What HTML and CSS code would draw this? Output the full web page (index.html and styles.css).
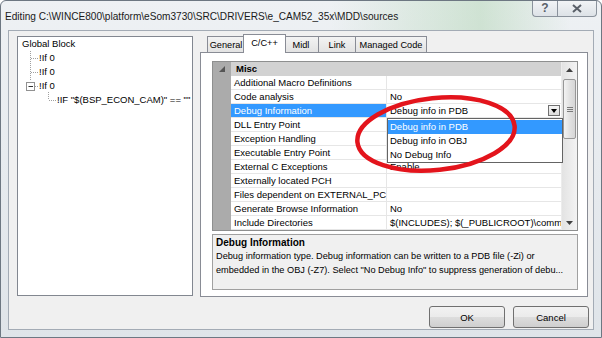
FILE: index.html
```html
<!DOCTYPE html>
<html lang="en">
<head>
    <meta charset="UTF-8">
    <meta name="viewport" content="width=device-width, initial-scale=1.0">
    <title>Editing sources</title>
    <link rel="stylesheet" href="styles.css">
</head>
<body>

<div class="window">
    <div class="titlebar">
        <span class="title">Editing C:\WINCE800\platform\eSom3730\SRC\DRIVERS\e_CAM52_35x\MDD\sources</span>
        <div class="caption">
            <span class="cap-btn help">?</span>
            <span class="cap-btn close">
                <svg width="10" height="9" viewBox="0 0 10 9"><path d="M1 1 L9 8 M9 1 L1 8" stroke="#5a6069" stroke-width="2" fill="none"/></svg>
            </span>
        </div>
    </div>

    <div class="client">
        <div class="main">
            <!-- 左のツリー -->
            <div class="tree">
                <svg class="tree-lines" width="60" height="80">
                    <g stroke="#a0a0a0" stroke-dasharray="1,1" fill="none">
                        <path d="M12.5 14 V44"/>
                        <path d="M13 21.5 H20"/>
                        <path d="M13 35.5 H20"/>
                        <path d="M17 49.5 H20"/>
                        <path d="M30.5 55 V63"/>
                        <path d="M31 63.5 H38"/>
                    </g>
                    <rect x="8.5" y="45.5" width="8" height="8" fill="#fff" stroke="#919191"/>
                    <path d="M10.5 49.5 H15" stroke="#333"/>
                </svg>
                <div class="node">Global Block</div>
                <div class="node lvl1">!If 0</div>
                <div class="node lvl1">!If 0</div>
                <div class="node lvl1">!If 0</div>
                <div class="node lvl2">!IF "$(BSP_ECON_CAM)" == ""</div>
            </div>

            <div class="tabarea">
                <div class="tabs">
                    <span class="tab">General</span>
                    <span class="tab active">C/C++</span>
                    <span class="tab">Midl</span>
                    <span class="tab">Link</span>
                    <span class="tab">Managed Code</span>
                </div>
                <div class="panel">
                    <div class="grid">
                        <div class="rows">
                            <div class="cat">
                                <span class="margin">
                                    <svg width="6" height="6" viewBox="0 0 6 6"><path d="M6 0 V6 H0 Z" fill="#555"/></svg>
                                </span>
                                <span class="cat-name">Misc</span>
                            </div>
                            <div class="row"><span class="margin"></span><span class="name">Additional Macro Definitions</span><span class="value"></span></div>
                            <div class="row"><span class="margin"></span><span class="name">Code analysis</span><span class="value">No</span></div>
                            <div class="row selected"><span class="margin"></span><span class="name">Debug Information</span>
                                <span class="value editor">Debug info in PDB
                                    <span class="drop-btn"><svg width="6" height="4" viewBox="0 0 6 4"><path d="M0 0 H6 L3 4 Z" fill="#000"/></svg></span>
                                </span>
                            </div>
                            <div class="row"><span class="margin"></span><span class="name">DLL Entry Point</span><span class="value"></span></div>
                            <div class="row"><span class="margin"></span><span class="name">Exception Handling</span><span class="value"></span></div>
                            <div class="row"><span class="margin"></span><span class="name">Executable Entry Point</span><span class="value"></span></div>
                            <div class="row"><span class="margin"></span><span class="name">External C Exceptions</span><span class="value">Enable</span></div>
                            <div class="row"><span class="margin"></span><span class="name">Externally located PCH</span><span class="value"></span></div>
                            <div class="row"><span class="margin"></span><span class="name">Files dependent on EXTERNAL_PCH</span><span class="value"></span></div>
                            <div class="row"><span class="margin"></span><span class="name">Generate Browse Information</span><span class="value">No</span></div>
                            <div class="row"><span class="margin"></span><span class="name">Include Directories</span><span class="value">$(INCLUDES); $(_PUBLICROOT)\common\oak\inc</span></div>
                        </div>
                        <div class="scrollbar">
                            <span class="sb-arrow"><svg width="7" height="4" viewBox="0 0 7 4"><path d="M0 4 H7 L3.5 0 Z" fill="#404040"/></svg></span>
                            <div class="sb-track">
                                <span class="sb-thumb"><span class="grip"></span></span>
                            </div>
                            <span class="sb-arrow"><svg width="7" height="4" viewBox="0 0 7 4"><path d="M0 0 H7 L3.5 4 Z" fill="#404040"/></svg></span>
                        </div>
                        <!-- 開いているドロップダウン -->
                        <div class="dropdown">
                            <div class="item hl">Debug info in PDB</div>
                            <div class="item">Debug info in OBJ</div>
                            <div class="item">No Debug Info</div>
                        </div>
                    </div>
                    <div class="desc">
                        <div class="desc-title">Debug Information</div>
                        <div class="desc-text">Debug information type. Debug information can be written to a PDB file (-Zi) or<br>embedded in the OBJ (-Z7). Select "No Debug Info" to suppress generation of debu...</div>
                    </div>
                </div>
            </div>
        </div>
        <div class="buttons">
            <button class="btn">OK</button>
            <button class="btn">Cancel</button>
        </div>
    </div>

    <!-- 赤い丸の注釈 -->
    <svg class="annotation" width="602" height="338">
        <ellipse cx="436" cy="134" rx="79" ry="36" transform="rotate(-6 436 134)" fill="none" stroke="#e3141c" stroke-width="4.5"/>
    </svg>
</div>

</body>
</html>
```

FILE: styles.css
```css
body {
    margin: 0;
    font-family: "Liberation Sans", Arial, sans-serif;
    font-size: 9.5px;
    color: #000;
}

.window {
    position: relative;
    width: 602px;
    height: 338px;
    box-sizing: border-box;
    border: 1px solid #6d7782;
    border-radius: 6px 6px 0 0;
    background: linear-gradient(to bottom, #eef1f4, #dfe4e9);
    padding: 0 7px 7px 7px;
    display: flex;
    flex-direction: column;
    overflow: hidden;
}

.titlebar {
    position: relative;
    height: 29px;
    display: flex;
    align-items: center;
    background: linear-gradient(to right, rgba(255,255,255,0) 55%, rgba(150,200,150,0.35) 80%, rgba(255,255,255,0) 95%);
    margin: 0 -7px;
    padding-right: 7px;
    padding-left: 4px;
}
.title {
    font-size: 10.1px;
    color: #1a1a1a;
    padding-top: 2px;
}
.caption {
    position: absolute;
    top: -1px;
    right: 4px;
    display: flex;
}
.cap-btn {
    height: 17px;
    display: flex;
    align-items: center;
    justify-content: center;
    border: 1px solid #8a929c;
    border-top: none;
    background: linear-gradient(to bottom, #f3f5f7, #dde2e7);
    color: #5a6069;
    font-size: 12px;
    font-weight: bold;
    box-sizing: border-box;
}
.help {
    width: 25px;
    border-radius: 0 0 0 4px;
    border-right: none;
}
.close {
    width: 40px;
    border-radius: 0 0 4px 0;
}

.client {
    flex: 1;
    background-color: #f0f0f0;
    border: 1px solid #a3abb5;
    display: flex;
    flex-direction: column;
}
.main {
    display: flex;
    padding: 3px 0 0 8px;
}

/* ツリー */
.tree {
    position: relative;
    width: 176px;
    height: 260px;
    margin-top: 2px;
    box-sizing: border-box;
    border: 1px solid #828790;
    background-color: #fff;
}
.tree-lines {
    position: absolute;
    left: 0;
    top: 0;
}
.node {
    position: relative;
    height: 14px;
    line-height: 14px;
    padding-left: 4px;
    white-space: nowrap;
}
.node.lvl1 { padding-left: 21px; }
.node.lvl2 { padding-left: 39px; }

/* タブ */
.tabarea {
    margin-left: 7px;
    width: 388px;
    display: flex;
    flex-direction: column;
}
.tabs {
    display: grid;
    grid-template-columns: 38px 39px 35px 37px 71px;
    height: 18px;
    padding-left: 7px;
    align-items: end;
}
.tab {
    height: 16px;
    line-height: 16px;
    box-sizing: border-box;
    border: 1px solid #898c95;
    border-bottom: none;
    border-left: none;
    background: linear-gradient(to bottom, #f3f3f3, #e3e3e3);
    text-align: center;
    white-space: nowrap;
    font-size: 9.2px;
}
.tab:first-child {
    border-left: 1px solid #898c95;
}
.tab.active {
    height: 19px;
    line-height: 17px;
    margin: 0 -2px -1px -2px;
    background: #fff;
    border-left: 1px solid #898c95;
    position: relative;
    z-index: 1;
}
.panel {
    height: 245px;
    box-sizing: border-box;
    border: 1px solid #898c95;
    background-color: #fff;
    padding: 8px 9px 0 11px;
}

/* プロパティグリッド */
.grid {
    position: relative;
    display: flex;
    height: 170px;
    box-sizing: border-box;
    border: 1px solid #8e8f8f;
    background-color: #fff;
}
.rows {
    flex: 1;
    overflow: hidden;
}
.cat, .row {
    display: flex;
    height: 14px;
    line-height: 14px;
}
.margin {
    width: 18px;
    flex: none;
    background-color: #ababab;
    display: flex;
    align-items: center;
    justify-content: center;
}
.cat {
    background-color: #d2d2d2;
}
.cat-name {
    font-weight: bold;
    padding-left: 5px;
}
.name {
    width: 156px;
    flex: none;
    padding-left: 3px;
    border-bottom: 1px solid #e6e6e6;
    border-right: 1px solid #e6e6e6;
    white-space: nowrap;
    overflow: hidden;
    box-sizing: border-box;
}
.value {
    flex: 1;
    padding-left: 3px;
    border-bottom: 1px solid #e6e6e6;
    white-space: nowrap;
    overflow: hidden;
    box-sizing: border-box;
}
.row.selected .name {
    background-color: #3399ff;
    color: #fff;
}
.editor {
    display: flex;
    align-items: center;
    justify-content: space-between;
    padding-right: 1px;
}
.drop-btn {
    width: 12px;
    height: 11px;
    box-sizing: border-box;
    border: 1px solid #707070;
    background: linear-gradient(to bottom, #f6f6f6, #dcdcdc);
    display: flex;
    align-items: center;
    justify-content: center;
}

.scrollbar {
    width: 15px;
    flex: none;
    display: flex;
    flex-direction: column;
    background: linear-gradient(to right, #e3e3e3, #f3f3f3);
    border-left: 1px solid #ececec;
}
.sb-arrow {
    height: 15px;
    display: flex;
    align-items: center;
    justify-content: center;
}
.sb-track {
    flex: 1;
    padding-top: 2px;
}
.sb-thumb {
    display: flex;
    align-items: center;
    justify-content: center;
    height: 60px;
    margin: 0 1px;
    box-sizing: border-box;
    border: 1px solid #979797;
    border-radius: 2px;
    background: linear-gradient(to right, #f3f3f3, #e2e2e2 50%, #d6d6d6);
}
.grip {
    width: 6px;
    height: 5px;
    border-top: 1px solid #7a7a7a;
    border-bottom: 1px solid #7a7a7a;
    box-sizing: border-box;
    position: relative;
}
.grip::after {
    content: "";
    position: absolute;
    left: 0;
    right: 0;
    top: 1px;
    border-top: 1px solid #7a7a7a;
}

.dropdown {
    position: absolute;
    left: 174px;
    top: 56px;
    width: 176px;
    height: 45px;
    box-sizing: border-box;
    border: 1px solid #646464;
    background-color: #fff;
    padding-top: 1px;
}
.item {
    height: 14px;
    line-height: 14px;
    padding-left: 2px;
}
.item.hl {
    background-color: #3399ff;
    color: #fff;
}

/* 説明欄 */
.desc {
    margin-top: 3px;
    height: 56px;
    box-sizing: border-box;
    border: 1px solid #a0a0a0;
    background-color: #f0f0f0;
    padding: 1px 3px;
}
.desc-title {
    font-weight: bold;
    font-size: 10px;
    line-height: 14px;
}
.desc-text {
    font-size: 9.2px;
    line-height: 13.5px;
    white-space: nowrap;
}

.buttons {
    display: flex;
    justify-content: flex-end;
    gap: 8px;
    padding: 9px 4px 0 0;
}
.btn {
    width: 76px;
    height: 22px;
    font-family: "Liberation Sans", Arial, sans-serif;
    font-size: 9.5px;
    border: 1px solid #707070;
    border-radius: 3px;
    background: linear-gradient(to bottom, #f2f2f2 0%, #ebebeb 50%, #dddddd 51%, #cfcfcf 100%);
    color: #000;
}

.annotation {
    position: absolute;
    left: -1px;
    top: -1px;
    pointer-events: none;
}
```
